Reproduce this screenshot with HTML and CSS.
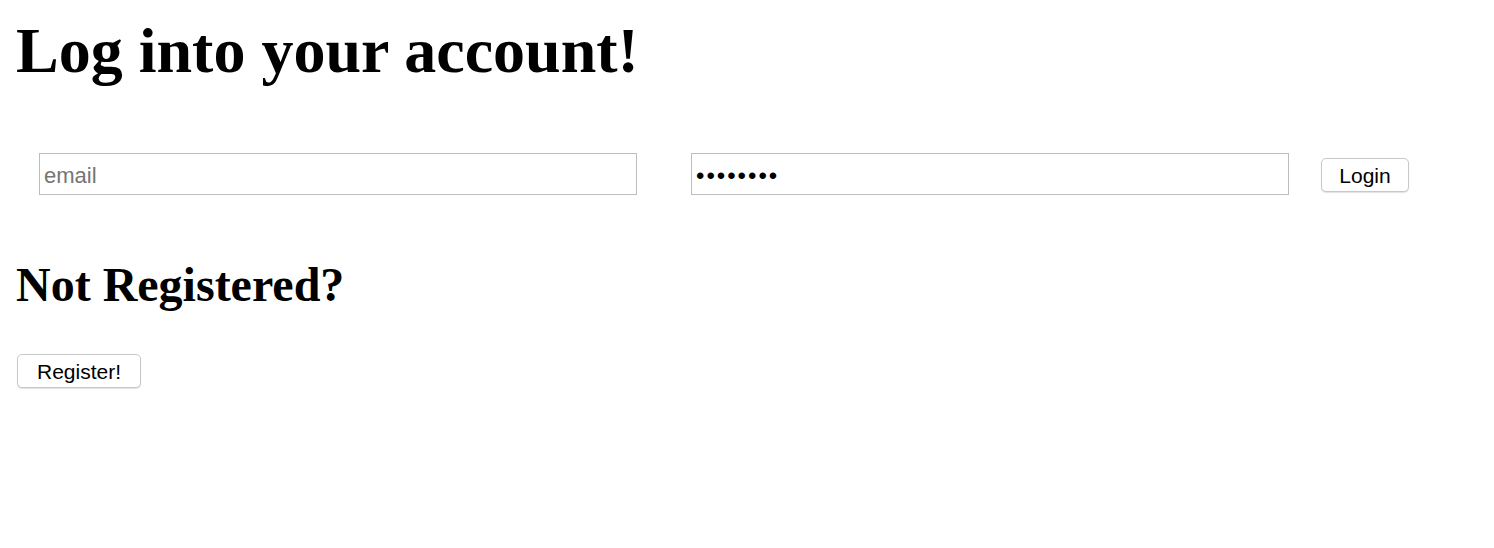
FILE: index.html
```html
<!DOCTYPE html>
<html>
<head>
<meta charset="utf-8">
<link rel="stylesheet" href="styles.css">
</head>
<body>
<div class="page">
  <h1 class="title">Log into your account!</h1>
  <form class="login-row">
    <input class="field field-email" type="email" placeholder="email">
    <input class="field field-password" type="password" value="password">
    <button class="btn btn-login" type="button">Login</button>
  </form>
  <h2 class="subtitle">Not Registered?</h2>
  <button class="btn btn-register" type="button">Register!</button>
</div>
</body>
</html>
```

FILE: styles.css
```css
html, body {
  margin: 0;
  padding: 0;
  background: #fff;
}

.page {
  padding: 14px 16px;
  font-family: "Liberation Serif", "Times New Roman", serif;
  color: #000;
}

.title {
  margin: 0;
  font-size: 64px;
  font-weight: bold;
  line-height: normal;
}

.login-row {
  display: flex;
  align-items: center;
  margin: 65px 0 0 23px;
}

.field {
  box-sizing: border-box;
  width: 598px;
  height: 42px;
  border: 1px solid #bdbdbd;
  border-radius: 0;
  padding: 4px 4px 0;
  font-family: "Liberation Sans", Arial, sans-serif;
  font-size: 22px;
  color: #000;
  background: #fff;
  outline: none;
}

.field::placeholder {
  color: #757575;
}

.field-password {
  margin-left: 54px;
  font-size: 24px;
  letter-spacing: 2px;
}

.btn {
  box-sizing: border-box;
  height: 34px;
  border: 1px solid #c8c8c8;
  border-radius: 5px;
  background: #fff;
  box-shadow: 0 1px 1px rgba(0, 0, 0, 0.12);
  font-family: "Liberation Sans", Arial, sans-serif;
  font-size: 21px;
  color: #000;
  padding: 2px 10px 0;
}

.btn-login {
  margin: 2px 0 0 32px;
  width: 88px;
}

.subtitle {
  margin: 62px 0 0;
  font-size: 48px;
  font-weight: bold;
  line-height: normal;
}

.btn-register {
  margin: 42px 0 0 1px;
  width: 124px;
}
```
